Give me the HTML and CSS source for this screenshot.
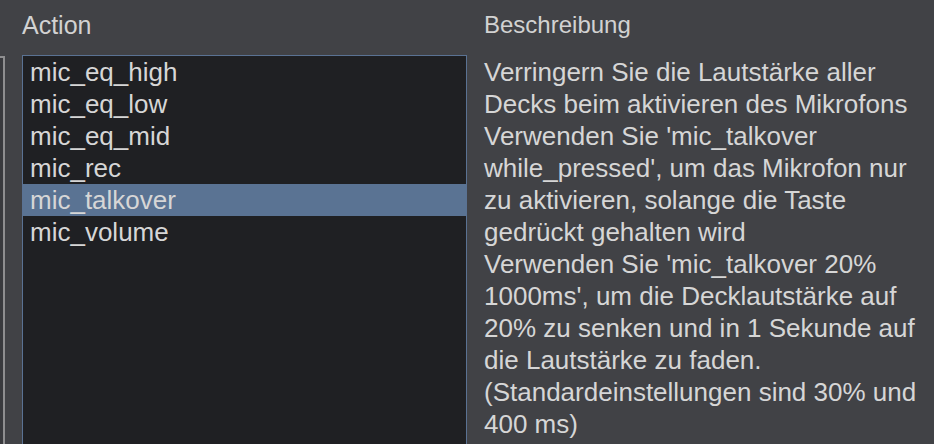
FILE: index.html
```html
<!DOCTYPE html>
<html>
<head>
<meta charset="utf-8">
<link rel="stylesheet" href="styles.css">
</head>
<body>
<div class="page">
  <div class="head-spacer"></div>
  <div class="head">Action</div>
  <div class="head head-desc">Beschreibung</div>

  <div class="sliver"></div>
  <ul class="list">
    <li class="item">mic_eq_high</li>
    <li class="item">mic_eq_low</li>
    <li class="item">mic_eq_mid</li>
    <li class="item">mic_rec</li>
    <li class="item selected">mic_talkover</li>
    <li class="item">mic_volume</li>
  </ul>
  <div class="desc">Verringern Sie die Lautstärke aller<br>Decks beim aktivieren des Mikrofons<br>Verwenden Sie 'mic_talkover<br>while_pressed', um das Mikrofon nur<br>zu aktivieren, solange die Taste<br>gedrückt gehalten wird<br>Verwenden Sie 'mic_talkover 20%<br>1000ms', um die Decklautstärke auf<br>20% zu senken und in 1 Sekunde auf<br>die Lautstärke zu faden.<br>(Standardeinstellungen sind 30% und<br>400 ms)</div>
</div>
</body>
</html>
```

FILE: styles.css
```css
html, body {
  margin: 0;
  padding: 0;
  background: #414246;
  height: 444px;
  overflow: hidden;
}

body {
  font-family: "Liberation Sans", Arial, Helvetica, sans-serif;
  color: #d6d6d6;
}

.page {
  display: grid;
  grid-template-columns: 5px 445px 1fr;
  grid-template-rows: 55px 389px;
  column-gap: 17px;
}

.head {
  font-size: 25px;
  line-height: 32px;
  padding-top: 9px;
  color: #d2d2d2;
}

.head-desc {
  font-size: 24px;
}

.sliver {
  background: #393a3e;
  border-right: 2px solid #8e8e90;
  border-top: 2px solid #8e8e90;
  box-sizing: border-box;
  margin-top: 1px;
}

.list {
  list-style: none;
  margin: 0;
  padding: 0;
  background: #1f2023;
  border: 1px solid #5a7293;
  border-bottom: none;
  box-sizing: border-box;
  overflow: hidden;
}

.item {
  font-size: 26px;
  line-height: 32px;
  height: 32px;
  padding-left: 7px;
  color: #d6d6d6;
}

.item.selected {
  background: #5a7393;
}

.desc {
  font-size: 26px;
  line-height: 32px;
  padding-top: 1px;
  white-space: nowrap;
  color: #d6d6d6;
}
```
